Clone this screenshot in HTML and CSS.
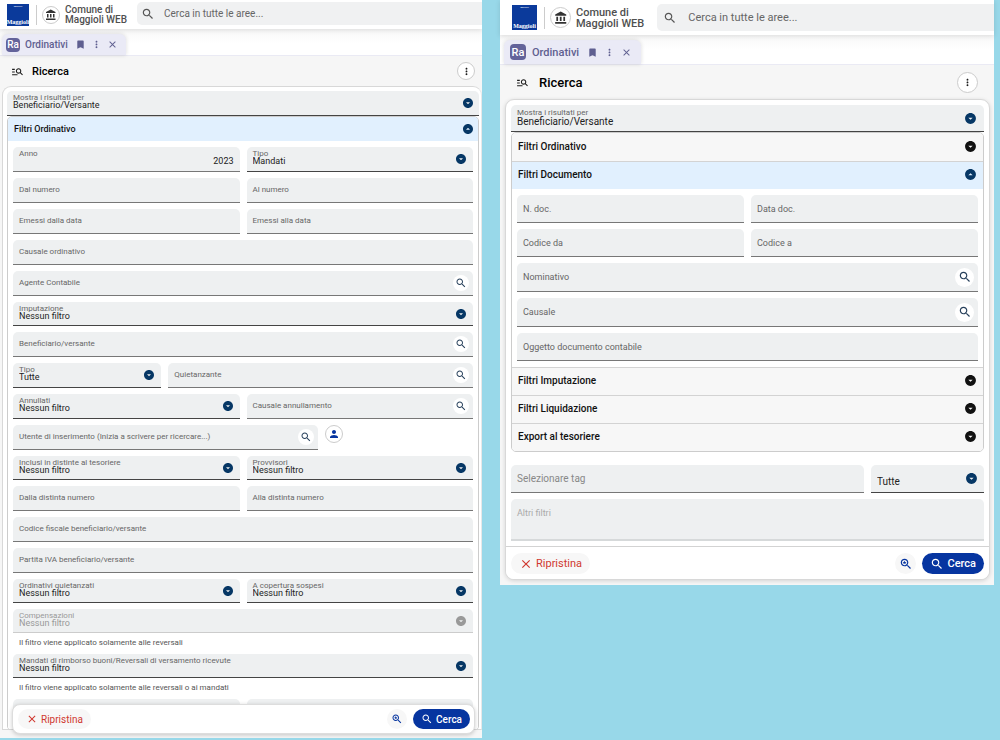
FILE: index.html
```html
<!DOCTYPE html>
<html lang="it">
<head>
<meta charset="utf-8">
<meta name="viewport" content="width=device-width, initial-scale=1">
<title>Ordinativi - Ricerca</title>
<link rel="stylesheet" href="styles.css">
</head>
<body>
<svg class="sprite" aria-hidden="true">
  <symbol id="search" viewBox="0 0 24 24"><path d="M15.5 14h-.79l-.28-.27C15.41 12.59 16 11.11 16 9.5 16 5.91 13.09 3 9.5 3S3 5.91 3 9.5 5.91 16 9.5 16c1.61 0 3.09-.59 4.23-1.57l.27.28v.79l5 4.99L20.49 19l-4.99-5zm-6 0C7.01 14 5 11.99 5 9.5S7.01 5 9.5 5 14 7.01 14 9.5 11.99 14 9.5 14z"/></symbol>
  <symbol id="saved" viewBox="0 0 24 24"><path d="M15.5 14h-.79l-.28-.27C15.41 12.59 16 11.11 16 9.5 16 5.91 13.09 3 9.5 3S3 5.91 3 9.5 5.91 16 9.5 16c1.61 0 3.09-.59 4.23-1.57l.27.28v.79l5 4.99L20.49 19l-4.99-5zm-6 0C7.01 14 5 11.99 5 9.5S7.01 5 9.5 5 14 7.01 14 9.5 11.99 14 9.5 14z"/><path d="M9.5 6l.9 2.4 2.5.1-2 1.6.7 2.5-2.1-1.4-2.1 1.4.7-2.5-2-1.6 2.5-.1z"/></symbol>
  <symbol id="down" viewBox="0 0 24 24"><path d="M12 2C6.48 2 2 6.48 2 12s4.48 10 10 10 10-4.48 10-10S17.52 2 12 2zm0 12.500l-4-4h8l-4 4z"/></symbol>
  <symbol id="up" viewBox="0 0 24 24"><path d="M12 2C6.480 2 2 6.480 2 12s4.480 10 10 10 10-4.480 10-10S17.520 2 12 2zM8 13.500l4-4 4 4H8z"/></symbol>
  <symbol id="bank" viewBox="0 0 24 24"><path d="M4 10v7h3v-7H4zm6 0v7h3v-7h-3zM2 22h19v-3H2v3zm14-12v7h3v-7h-3zm-4.500-9L2 6v2h19V6l-9.500-5z"/></symbol>
  <symbol id="person" viewBox="0 0 24 24"><path d="M12 12c2.210 0 4-1.790 4-4s-1.790-4-4-4-4 1.790-4 4 1.790 4 4 4zm0 2c-2.670 0-8 1.340-8 4v2h16v-2c0-2.660-5.330-4-8-4z"/></symbol>
  <symbol id="manage" viewBox="0 0 24 24"><path d="M7 9H2V7h5v2zm0 3H2v2h5v-2zm13.590 7l-3.830-3.830c-.8.520-1.740.830-2.760.830-2.760 0-5-2.240-5-5s2.240-5 5-5 5 2.240 5 5c0 1.020-.310 1.960-.830 2.750L22 17.590 20.590 19zM17 11c0-1.650-1.350-3-3-3s-3 1.350-3 3 1.350 3 3 3 3-1.350 3-3zM2 19h10v-2H2v2z"/></symbol>
  <symbol id="bookmark" viewBox="0 0 24 24"><path d="M17 3H7c-1.100 0-2 .9-2 2v16l7-3 7 3V5c0-1.100-.9-2-2-2z"/></symbol>
  <symbol id="more" viewBox="0 0 24 24"><path d="M12 8c1.100 0 2-.9 2-2s-.9-2-2-2-2 .9-2 2 .9 2 2 2zm0 2c-1.100 0-2 .9-2 2s.9 2 2 2 2-.9 2-2-.9-2-2-2zm0 6c-1.100 0-2 .9-2 2s.9 2 2 2 2-.9 2-2-.9-2-2-2z"/></symbol>
  <symbol id="close" viewBox="0 0 24 24"><path d="M19 6.410L17.590 5 12 10.590 6.410 5 5 6.410 10.590 12 5 17.590 6.410 19 12 13.410 17.590 19 19 17.590 13.410 12z"/></symbol>
</svg>
<main class="board">
  <section class="panel panel--small">
    <header class="topbar">
      <div class="logo"><span class="logo__group">GRUPPO</span><span class="logo__name">Maggioli</span></div>
      <div class="org">
        <span class="round org__icon"><svg class="icon"><use href="#bank"/></svg></span>
        <span class="org__name">Comune di<br>Maggioli WEB</span>
      </div>
      <label class="global"><svg class="icon global__icon"><use href="#search"/></svg><input class="global__input" type="text" placeholder="Cerca in tutte le aree..." aria-label="Cerca in tutte le aree"></label>
    </header>
    <nav class="tabs">
      <div class="tab">
        <span class="tab__app">Ra</span><span class="tab__name">Ordinativi</span>
        <button class="tab__btn" type="button" aria-label="Segnalibro"><svg class="icon"><use href="#bookmark"/></svg></button>
        <button class="tab__btn" type="button" aria-label="Opzioni"><svg class="icon"><use href="#more"/></svg></button>
        <button class="tab__btn" type="button" aria-label="Chiudi"><svg class="icon"><use href="#close"/></svg></button>
      </div>
    </nav>
    <div class="title">
      <svg class="icon title__icon"><use href="#manage"/></svg><h1 class="title__text">Ricerca</h1>
      <button class="round title__more" type="button" aria-label="Altro"><svg class="icon"><use href="#more"/></svg></button>
    </div>
    <form class="card">
      <div class="field field--select field--main"><label class="field__label" for="a0">Mostra i risultati per</label><select class="field__input" id="a0"><option>Beneficiario/Versante</option></select><svg class="icon field__arrow"><use href="#down"/></svg></div>
      <div class="accordion">
        <button class="section section--open" type="button">Filtri Ordinativo<svg class="icon section__arrow"><use href="#up"/></svg></button>
        <div class="rows">
          <div class="row row--half">
            <div class="field field--filled"><label class="field__label" for="a1">Anno</label><input class="field__input field__input--number" id="a1" type="text" value="2023"></div>
            <div class="field field--select"><label class="field__label" for="a2">Tipo</label><select class="field__input" id="a2"><option>Mandati</option></select><svg class="icon field__arrow"><use href="#down"/></svg></div>
          </div>
          <div class="row row--half">
            <div class="field"><label class="field__label" for="a3">Dal numero</label><input class="field__input" id="a3" type="text"></div>
            <div class="field"><label class="field__label" for="a4">Al numero</label><input class="field__input" id="a4" type="text"></div>
          </div>
          <div class="row row--half">
            <div class="field"><label class="field__label" for="a5">Emessi dalla data</label><input class="field__input" id="a5" type="text"></div>
            <div class="field"><label class="field__label" for="a6">Emessi alla data</label><input class="field__input" id="a6" type="text"></div>
          </div>
          <div class="row"><div class="field"><label class="field__label" for="a7">Causale ordinativo</label><input class="field__input" id="a7" type="text"></div></div>
          <div class="row"><div class="field field--search"><label class="field__label" for="a8">Agente Contabile</label><input class="field__input" id="a8" type="text"><button class="lookup" type="button" aria-label="Cerca agente"><svg class="icon"><use href="#search"/></svg></button></div></div>
          <div class="row"><div class="field field--select"><label class="field__label" for="a9">Imputazione</label><select class="field__input" id="a9"><option>Nessun filtro</option></select><svg class="icon field__arrow"><use href="#down"/></svg></div></div>
          <div class="row"><div class="field field--search"><label class="field__label" for="a10">Beneficiario/versante</label><input class="field__input" id="a10" type="text"><button class="lookup" type="button" aria-label="Cerca beneficiario"><svg class="icon"><use href="#search"/></svg></button></div></div>
          <div class="row row--narrow-wide">
            <div class="field field--select"><label class="field__label" for="a11">Tipo</label><select class="field__input" id="a11"><option>Tutte</option></select><svg class="icon field__arrow"><use href="#down"/></svg></div>
            <div class="field field--search"><label class="field__label" for="a12">Quietanzante</label><input class="field__input" id="a12" type="text"><button class="lookup" type="button" aria-label="Cerca quietanzante"><svg class="icon"><use href="#search"/></svg></button></div>
          </div>
          <div class="row row--half">
            <div class="field field--select"><label class="field__label" for="a13">Annullati</label><select class="field__input" id="a13"><option>Nessun filtro</option></select><svg class="icon field__arrow"><use href="#down"/></svg></div>
            <div class="field field--search"><label class="field__label" for="a14">Causale annullamento</label><input class="field__input" id="a14" type="text"><button class="lookup" type="button" aria-label="Cerca causale"><svg class="icon"><use href="#search"/></svg></button></div>
          </div>
          <div class="row row--wide-narrow">
            <div class="field field--search"><label class="field__label" for="a15">Utente di inserimento (Inizia a scrivere per ricercare...)</label><input class="field__input" id="a15" type="text"><button class="lookup" type="button" aria-label="Cerca utente"><svg class="icon"><use href="#search"/></svg></button></div>
            <button class="round user" type="button" aria-label="Utente corrente"><svg class="icon"><use href="#person"/></svg></button>
          </div>
          <div class="row row--half">
            <div class="field field--select"><label class="field__label" for="a16">Inclusi in distinte al tesoriere</label><select class="field__input" id="a16"><option>Nessun filtro</option></select><svg class="icon field__arrow"><use href="#down"/></svg></div>
            <div class="field field--select"><label class="field__label" for="a17">Provvisori</label><select class="field__input" id="a17"><option>Nessun filtro</option></select><svg class="icon field__arrow"><use href="#down"/></svg></div>
          </div>
          <div class="row row--half">
            <div class="field"><label class="field__label" for="a18">Dalla distinta numero</label><input class="field__input" id="a18" type="text"></div>
            <div class="field"><label class="field__label" for="a19">Alla distinta numero</label><input class="field__input" id="a19" type="text"></div>
          </div>
          <div class="row"><div class="field"><label class="field__label" for="a20">Codice fiscale beneficiario/versante</label><input class="field__input" id="a20" type="text"></div></div>
          <div class="row"><div class="field"><label class="field__label" for="a21">Partita IVA beneficiario/versante</label><input class="field__input" id="a21" type="text"></div></div>
          <div class="row row--half">
            <div class="field field--select"><label class="field__label" for="a22">Ordinativi quietanzati</label><select class="field__input" id="a22"><option>Nessun filtro</option></select><svg class="icon field__arrow"><use href="#down"/></svg></div>
            <div class="field field--select"><label class="field__label" for="a23">A copertura sospesi</label><select class="field__input" id="a23"><option>Nessun filtro</option></select><svg class="icon field__arrow"><use href="#down"/></svg></div>
          </div>
          <div class="row"><div class="field field--select field--disabled"><label class="field__label" for="a24">Compensazioni</label><select class="field__input" id="a24" disabled><option>Nessun filtro</option></select><svg class="icon field__arrow"><use href="#down"/></svg></div><p class="hint">Il filtro viene applicato solamente alle reversali</p></div>
          <div class="row"><div class="field field--select"><label class="field__label" for="a25">Mandati di rimborso buoni/Reversali di versamento ricevute</label><select class="field__input" id="a25"><option>Nessun filtro</option></select><svg class="icon field__arrow"><use href="#down"/></svg></div><p class="hint">Il filtro viene applicato solamente alle reversali o ai mandati</p></div>
          <div class="row row--half"><div class="field"></div><div class="field"></div></div>
        </div>
      </div>
      <footer class="actions actions--floating">
        <button class="btn btn--reset" type="reset"><svg class="icon"><use href="#close"/></svg>Ripristina</button>
        <button class="btn-saved" type="button" aria-label="Ricerche salvate"><svg class="icon"><use href="#saved"/></svg></button>
        <button class="btn btn--go" type="button"><svg class="icon"><use href="#search"/></svg>Cerca</button>
      </footer>
    </form>
  </section>

  <section class="panel panel--large">
    <header class="topbar">
      <div class="logo"><span class="logo__group">GRUPPO</span><span class="logo__name">Maggioli</span></div>
      <div class="org">
        <span class="round org__icon"><svg class="icon"><use href="#bank"/></svg></span>
        <span class="org__name">Comune di<br>Maggioli WEB</span>
      </div>
      <label class="global"><svg class="icon global__icon"><use href="#search"/></svg><input class="global__input" type="text" placeholder="Cerca in tutte le aree..." aria-label="Cerca in tutte le aree"></label>
    </header>
    <nav class="tabs">
      <div class="tab">
        <span class="tab__app">Ra</span><span class="tab__name">Ordinativi</span>
        <button class="tab__btn" type="button" aria-label="Segnalibro"><svg class="icon"><use href="#bookmark"/></svg></button>
        <button class="tab__btn" type="button" aria-label="Opzioni"><svg class="icon"><use href="#more"/></svg></button>
        <button class="tab__btn" type="button" aria-label="Chiudi"><svg class="icon"><use href="#close"/></svg></button>
      </div>
    </nav>
    <div class="title">
      <svg class="icon title__icon"><use href="#manage"/></svg><h2 class="title__text">Ricerca</h2>
      <button class="round title__more" type="button" aria-label="Altro"><svg class="icon"><use href="#more"/></svg></button>
    </div>
    <form class="card">
      <div class="field field--select field--main"><label class="field__label" for="b0">Mostra i risultati per</label><select class="field__input" id="b0"><option>Beneficiario/Versante</option></select><svg class="icon field__arrow"><use href="#down"/></svg></div>
      <div class="accordion">
        <button class="section" type="button">Filtri Ordinativo<svg class="icon section__arrow"><use href="#down"/></svg></button>
        <button class="section section--open" type="button">Filtri Documento<svg class="icon section__arrow"><use href="#up"/></svg></button>
        <div class="rows">
          <div class="row row--half">
            <div class="field"><label class="field__label" for="b1">N. doc.</label><input class="field__input" id="b1" type="text"></div>
            <div class="field"><label class="field__label" for="b2">Data doc.</label><input class="field__input" id="b2" type="text"></div>
          </div>
          <div class="row row--half">
            <div class="field"><label class="field__label" for="b3">Codice da</label><input class="field__input" id="b3" type="text"></div>
            <div class="field"><label class="field__label" for="b4">Codice a</label><input class="field__input" id="b4" type="text"></div>
          </div>
          <div class="row"><div class="field field--search"><label class="field__label" for="b5">Nominativo</label><input class="field__input" id="b5" type="text"><button class="lookup" type="button" aria-label="Cerca nominativo"><svg class="icon"><use href="#search"/></svg></button></div></div>
          <div class="row"><div class="field field--search"><label class="field__label" for="b6">Causale</label><input class="field__input" id="b6" type="text"><button class="lookup" type="button" aria-label="Cerca causale"><svg class="icon"><use href="#search"/></svg></button></div></div>
          <div class="row"><div class="field"><label class="field__label" for="b7">Oggetto documento contabile</label><input class="field__input" id="b7" type="text"></div></div>
        </div>
        <button class="section" type="button">Filtri Imputazione<svg class="icon section__arrow"><use href="#down"/></svg></button>
        <button class="section" type="button">Filtri Liquidazione<svg class="icon section__arrow"><use href="#down"/></svg></button>
        <button class="section" type="button">Export al tesoriere<svg class="icon section__arrow"><use href="#down"/></svg></button>
      </div>
      <div class="extras">
        <div class="row row--tag">
          <div class="field"><input class="field__input field__input--tag" type="text" placeholder="Selezionare tag" aria-label="Selezionare tag"></div>
          <div class="field field--select"><select class="field__input" aria-label="Tag"><option>Tutte</option></select><svg class="icon field__arrow"><use href="#down"/></svg></div>
        </div>
        <div class="field field--area"><label class="field__label" for="b8">Altri filtri</label><textarea class="field__input" id="b8" disabled></textarea></div>
      </div>
      <footer class="actions">
        <button class="btn btn--reset" type="reset"><svg class="icon"><use href="#close"/></svg>Ripristina</button>
        <button class="btn-saved" type="button" aria-label="Ricerche salvate"><svg class="icon"><use href="#saved"/></svg></button>
        <button class="btn btn--go" type="button"><svg class="icon"><use href="#search"/></svg>Cerca</button>
      </footer>
    </form>
  </section>
</main>
</body>
</html>
```
FILE: styles.css
```css
* { box-sizing: border-box; }

body {
  margin: 0;
  background: #98d8e9;
  font-family: Roboto, "Liberation Sans", sans-serif;
  color: #1c1c1c;
}

button, input, select, textarea { font: inherit; color: inherit; margin: 0; padding: 0; border: 0; background: none; outline: 0; }
button { cursor: pointer; }
.sprite { display: none; }
.icon { width: 12px; height: 12px; fill: currentColor; flex: none; display: block; }

.board {
  display: grid;
  grid-template-columns: 482fr 494fr;
  gap: 18px;
  padding-right: 6px;
  align-items: start;
}

.panel { position: relative; display: flex; flex-direction: column; background: #f6f6f6; min-width: 0; }

.panel--small {
  --bar: 29px; --logo: 22px; --org: 10px; --org-line: 10px; --round: 18px;
  --tabs: 27px; --tab: 21px; --app: 14px; --tab-text: 10px;
  --title: 30px; --title-text: 11px;
  --field: 25px; --select: 24px; --search: 25px;
  --label: 8px; --label-floated: 8px; --value: 9px; --label-top: 3px; --value-top: 9px;
  --section: 24px; --section-text: 9px; --arrow: 12px; --lookup: 16px; --btn: 20px; --btn-text: 10px;
  height: calc(100vh - 2px);
  overflow: hidden;
  padding-bottom: 8px;
}

.panel--large {
  --bar: 35px; --logo: 25px; --org: 11px; --org-line: 11px; --round: 21px;
  --tabs: 30px; --tab: 24px; --app: 16px; --tab-text: 11px;
  --title: 34px; --title-text: 13px;
  --field: 28px; --select: 28px; --search: 29px;
  --label: 9px; --label-floated: 8px; --value: 10px; --label-top: 4px; --value-top: 11px;
  --section: 28px; --section-text: 10px; --arrow: 13px; --lookup: 19px; --btn: 21px; --btn-text: 11px;
  padding: 0 4px 5px 5px;
}

/* top bar */
.topbar {
  position: relative;
  display: flex;
  align-items: center;
  height: var(--bar);
  padding-left: 7px;
  background: #fff;
  box-shadow: 0 1px 5px rgba(0, 0, 0, .12);
}
.panel--large .topbar, .panel--large .tabs, .panel--large .title { margin: 0 -4px 0 -5px; }
.panel--large .topbar { padding-left: 12px; }
.logo {
  display: flex; flex-direction: column; justify-content: space-between; align-items: center;
  width: var(--logo); height: var(--logo);
  background: #0b3a9b; color: #fff; overflow: hidden;
  font-family: "Liberation Serif", serif; font-weight: 700;
}
.logo__group { font-size: 2px; line-height: 5px; }
.logo__name { font-size: 6px; line-height: 7px; }
.org { display: flex; align-items: center; gap: 5px; margin-left: 7px; padding-left: 5px; border-left: 1px solid #ccc; }
.org__name { font-size: var(--org); line-height: var(--org-line); font-weight: 500; color: #505050; white-space: nowrap; }
.round {
  display: flex; align-items: center; justify-content: center; flex: none;
  width: var(--round); height: var(--round);
  border: 1px solid #ccc; border-radius: 50%; background: #fff;
}
.org__icon { color: #333; }
.panel--large .org__icon .icon { width: 14px; height: 14px; }
.global {
  flex: 1; display: flex; align-items: center; align-self: stretch;
  margin: 2px 0 4px 10px; padding-left: 4px; gap: 9px;
  background: #f0f1f2; border-radius: 5px 0 0 5px; color: #555;
}
.panel--large .global { margin: 4px 0 4px 13px; padding-left: 6px; gap: 11px; }
.global__icon { width: 14px; height: 14px; }
.global__input { flex: 1; min-width: 0; font-size: var(--org); }
.global__input::placeholder { color: #666; opacity: 1; }

/* tabs */
.tabs { display: flex; align-items: flex-end; height: var(--tabs); padding-left: 2px; background: linear-gradient(#f8f8f8, #fff 14px); border-bottom: 1px solid #eaeaf4; }
.panel--large .tabs { padding-left: 4px; }
.tab {
  display: flex; align-items: center; gap: 5px;
  height: var(--tab); padding: 0 8px 0 4px;
  background: #eaeaf6; color: #5f5f90;
  border-radius: 6px 6px 0 0; box-shadow: 0 0 4px rgba(0, 0, 0, .14);
}
.panel--large .tab { padding: 0 9px 0 6px; gap: 6px; }
.tab__app {
  display: flex; align-items: center; justify-content: center;
  width: var(--app); height: var(--app); border-radius: 4px;
  background: #63639a; color: #fff; font-size: var(--tab-text); font-weight: 500;
}
.tab__name { font-size: var(--tab-text); font-weight: 500; margin-right: 2px; }
.tab__btn .icon { width: 11px; height: 11px; }

/* title */
.title { display: flex; align-items: center; height: var(--title); padding: 0 7px 0 11px; }
.panel--large .title { padding: 0 16px; }
.title__icon { width: 13px; height: 13px; }
.title__text { flex: 1; margin: 0 0 0 8px; font-size: var(--title-text); font-weight: 500; color: #000; }
.panel--large .title__text { margin-left: 10px; }
.title__more .icon { width: 11px; height: 11px; }

/* card */
.card {
  flex: 1; min-height: 0;
  display: flex; flex-direction: column;
  margin: 0 0 0 2px; padding: 4px 2px 0 4px;
  background: #fff; border: 1px solid #d8d8d8; border-radius: 9px 9px 0 0;
  overflow: hidden;
}
.panel--small .card { border-right-color: #e8e8e8; }
.panel--large .card { margin: 0; padding: 5px 0 0; border-radius: 9px; box-shadow: 0 1px 4px rgba(0, 0, 0, .14); }
.panel--large .field--main, .panel--large .accordion, .panel--large .extras { margin-left: 5px; margin-right: 5px; }
.accordion { border: 1px solid #ccc; border-radius: 5px; overflow: hidden; flex: none; }
.panel--small .accordion { margin-bottom: -40px; }
.section {
  display: flex; align-items: center; justify-content: space-between;
  width: 100%; height: var(--section); padding: 0 6px;
  background: #f7f7f7; color: #111; font-size: var(--section-text); font-weight: 500; text-align: left;
}
.panel--large .section { padding-bottom: 2px; }
.section + .section, .rows + .section { border-top: 1px solid #d3d3d3; }
.section--open { background: #e1f0fe; }
.section__arrow { width: var(--arrow); height: var(--arrow); }
.panel--small .section { padding-right: 4px; }
.section--open .section__arrow { color: #063765; }

.rows { display: flex; flex-direction: column; gap: 6px; padding: 6px 5px; background: #fff; }
.row { display: grid; column-gap: 7px; }
.row--half { grid-template-columns: 1fr 1fr; }
.row--narrow-wide { grid-template-columns: 148fr 304fr; }
.row--wide-narrow { grid-template-columns: 304fr 148fr; }
.row--tag { grid-template-columns: 353fr 113fr; }

/* fields: label, control and adornment share one grid cell */
.field {
  display: grid; grid-template: minmax(0, 1fr) / minmax(0, 1fr); align-items: center;
  min-height: var(--field);
  background: #eef0f1; border-bottom: 1px solid #777; border-radius: 5px 5px 0 0;
}
.field > * { grid-area: 1 / 1; }
.field__label { justify-self: start; margin-left: 6px; font-size: var(--label); line-height: 8px; color: #666; white-space: nowrap; }
.field__input { width: 100%; height: 100%; padding: 0 6px; font-size: var(--value); line-height: 11px; color: #222; appearance: none; resize: none; }
.field--select { min-height: var(--select); border-bottom-color: #444; }
.field--main { flex: none; min-height: 25px; }
.panel--large .field--main { min-height: 27px; }
.field--select .field__label, .field--filled .field__label { align-self: start; margin-top: var(--label-top); font-size: var(--label-floated); }
.field--select .field__input, .field--filled .field__input { height: auto; align-self: start; margin-top: var(--value-top); }
.field--search { min-height: var(--search); }
.field__input--number { text-align: right; }
.field__arrow { justify-self: end; margin-right: 6px; width: var(--arrow); height: var(--arrow); color: #063765; pointer-events: none; }
.panel--small .field--main .field__arrow { margin-right: 5px; }
.panel--large .field--main .field__arrow { margin-right: 7px; }
.field--disabled { border-bottom-color: #ccc; }
.field--disabled .field__label, .field--disabled .field__input, .field--disabled .field__arrow { color: #999; opacity: 1; }
.lookup {
  display: flex; align-items: center; justify-content: center; justify-self: end;
  width: var(--lookup); height: var(--lookup); margin-right: 4px;
  background: #fff; border-radius: 50%; color: #28415c;
}
.user { color: #0635a0; }
.hint { margin: 0; padding: 5px 6px 1px; font-size: var(--label); line-height: 9px; color: #555; }

.extras { display: grid; gap: 6px; padding: 13px 0 5px; }
.extras .field--select .field__input { align-self: end; margin: 0 0 5px; }
.field__input--tag::placeholder { color: #888; opacity: 1; }
.field--area { min-height: 42px; border-bottom: 2px solid #d6d9da; }
.field--area .field__label { align-self: start; margin-top: 10px; color: #aaa; }

/* actions */
.actions { display: flex; align-items: center; gap: 6px; padding: 6px 5px 5px; background: #fff; border-top: 1px solid #d3d3d3; }
.actions--floating {
  position: absolute; left: 12px; right: 7px; bottom: 4px;
  padding: 4px 4px 4px 5px;
  border: 1px solid #ddd; border-radius: 8px; box-shadow: 0 1px 4px rgba(0, 0, 0, .2);
}
.btn {
  display: flex; align-items: center; gap: 3px;
  height: var(--btn); padding: 0 8px; border-radius: 11px;
  font-size: var(--btn-text);
}
.btn--reset { margin-right: auto; background: #f7f7f7; color: #d0382f; }
.btn--go { background: #0635a0; color: #fff; font-weight: 500; }
.btn-saved {
  display: flex; align-items: center; justify-content: center;
  width: var(--btn); height: var(--btn); border-radius: 50%;
  background: #f7f7f7; color: #0635a0;
}
.panel--large .btn .icon, .panel--large .btn-saved .icon, .panel--large .lookup .icon { width: 14px; height: 14px; }
```
